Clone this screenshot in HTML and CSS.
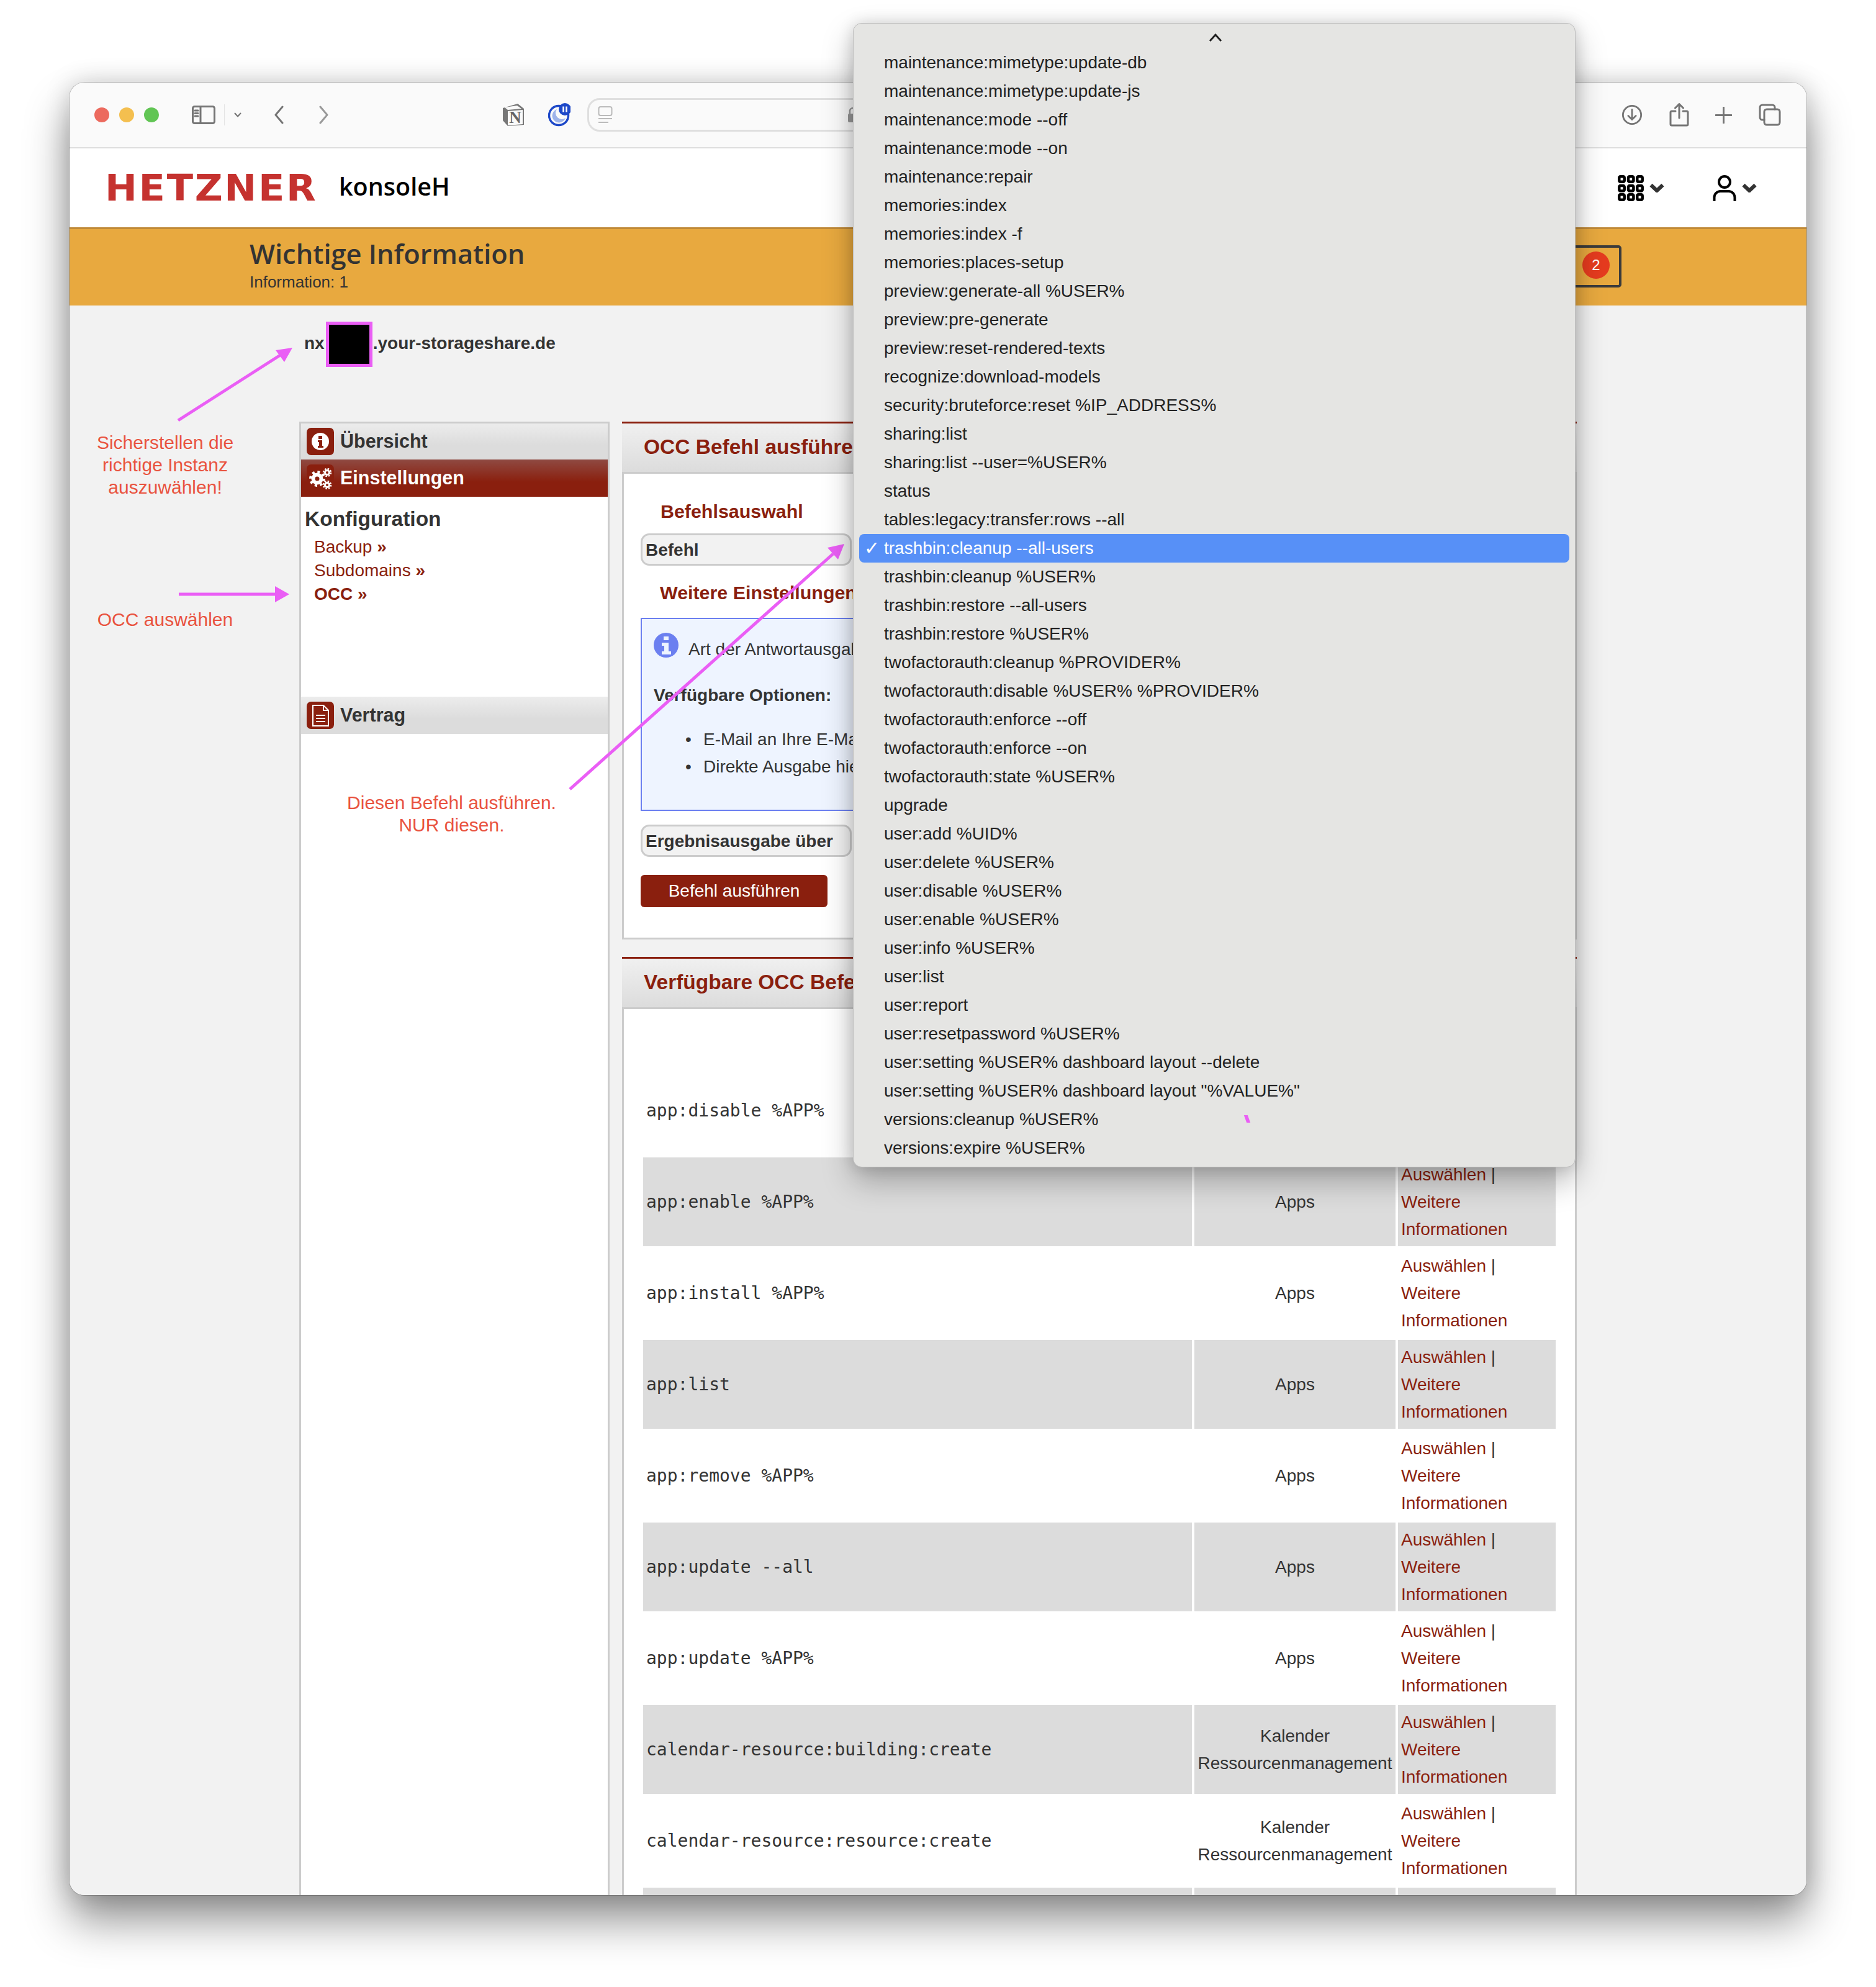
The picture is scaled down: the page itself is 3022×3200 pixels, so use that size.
FILE: index.html
```html
<!DOCTYPE html>
<html lang="de">
<head>
<meta charset="utf-8">
<title>konsoleH</title>
<link rel="stylesheet" href="styles.css">
</head>
<body>
<div class="stage">
  <div class="window">
    <div class="toolbar">
      <span class="light red"></span><span class="light yellow"></span><span class="light green"></span>
      <svg class="ti sidebar-ico" viewBox="0 0 38 30"><rect x="1.5" y="1.5" width="35" height="27" rx="3"/><path d="M14 2v26M5 8h5M5 12.500h5M5 17h5"/></svg>
      <span class="divider"></span>
      <svg class="ti chev-small" viewBox="0 0 12 8"><path d="M1.500 1.500L6 6.500l4.500-5"/></svg>
      <svg class="ti back" viewBox="0 0 16 30"><path d="M14 2L3 15l11 13"/></svg>
      <svg class="ti forward" viewBox="0 0 16 30"><path d="M2 2l11 13L2 28"/></svg>
      <svg class="notion" viewBox="0 0 36 38"><path d="M1 8L25 1l10 8v26l-26 2-8-9z" fill="#777"/><path d="M9 13l24-2v23l-24 2z" fill="#fafafa"/><path d="M4 7l5 4 22-2-7-5z" fill="#fafafa"/><text x="21" y="32" text-anchor="middle" class="notion-n">N</text></svg>
      <svg class="moon" viewBox="0 0 36 38"><circle cx="17" cy="20" r="15.500" fill="none" stroke="#1d48c8" stroke-width="3.500"/><path d="M14 10a11 11 0 1 0 14 14 10 10 0 0 1-14-14z" fill="#9db3ea"/><circle cx="27" cy="10" r="10" fill="#1d48c8"/><path d="M24.500 5.500v9M29.500 5.500v9" stroke="#fff" stroke-width="2.500"/></svg>
      <div class="urlbar">
        <svg class="reader" viewBox="0 0 24 28"><rect x="1.500" y="1" width="21" height="14" rx="3" fill="none" stroke="#bbb" stroke-width="2"/><path d="M1 20h22M1 26h16" stroke="#bbb" stroke-width="2"/></svg>
        <svg class="lock" viewBox="0 0 18 26"><path d="M4 12V7a5 5 0 0 1 10 0v5" fill="none" stroke="#999" stroke-width="2.500"/><rect x="1" y="11" width="16" height="14" rx="2" fill="#999"/></svg>
      </div>
      <svg class="ti dl" viewBox="0 0 36 36"><circle cx="18" cy="18" r="15.500"/><path d="M18 9v17M11.500 19.500L18 26l6.500-6.500"/></svg>
      <svg class="ti share" viewBox="0 0 32 38"><path d="M10 13H4a2 2 0 0 0-2 2v19a2 2 0 0 0 2 2h24a2 2 0 0 0 2-2V15a2 2 0 0 0-2-2h-6M16 24V2M9.500 8L16 1.500 22.500 8"/></svg>
      <svg class="ti plus" viewBox="0 0 28 28"><path d="M14 1v26M1 14h26"/></svg>
      <svg class="ti tabs" viewBox="0 0 36 36"><rect x="9" y="9" width="25" height="25" rx="4"/><path d="M9 26H6a4 4 0 0 1-4-4V6a4 4 0 0 1 4-4h16a4 4 0 0 1 4 4v3"/></svg>
    </div>

    <header class="brandbar">
      <span class="logo">HETZNER</span>
      <span class="konsole">konsoleH</span>
      <svg class="grid-ico" viewBox="0 0 42 42"><g fill="none" stroke="#000" stroke-width="4.500"><rect x="2.300" y="2.300" width="8.400" height="8.400" rx="2"/><rect x="17" y="2.300" width="8.400" height="8.400" rx="2"/><rect x="31.300" y="2.300" width="8.400" height="8.400" rx="2"/><rect x="2.300" y="17" width="8.400" height="8.400" rx="2"/><rect x="17" y="17" width="8.400" height="8.400" rx="2"/><rect x="31.300" y="17" width="8.400" height="8.400" rx="2"/><rect x="2.300" y="31.300" width="8.400" height="8.400" rx="2"/><rect x="17" y="31.300" width="8.400" height="8.400" rx="2"/><rect x="31.300" y="31.300" width="8.400" height="8.400" rx="2"/></g></svg>
      <svg class="chev-bold" viewBox="0 0 24 15"><path d="M2.500 3l9.500 9 9.500-9"/></svg>
      <svg class="user-ico" viewBox="0 0 38 42"><circle cx="19" cy="11" r="9" fill="none" stroke="#000" stroke-width="4"/><path d="M2.500 41v-5a10 10 0 0 1 10-10h13a10 10 0 0 1 10 10v5" fill="none" stroke="#000" stroke-width="4" stroke-linecap="round"/></svg>
      <svg class="chev-bold" viewBox="0 0 24 15"><path d="M2.500 3l9.500 9 9.500-9"/></svg>
    </header>

    <section class="notice">
      <div>
        <h1>Wichtige Information</h1>
        <p>Information: 1</p>
      </div>
      <div class="msgbox"><span class="count">2</span></div>
    </section>

    <div class="content">
      <div class="instance"><div class="instance-row">nx<span class="redact"></span>.your-storageshare.de</div></div>
      <div class="columns">
        <aside class="sidebar">
          <div class="nav">
            <span class="nav-ico"><svg viewBox="0 0 44 44"><circle cx="22" cy="22" r="14" fill="#fff"/><path d="M19 13h6v5h-6zM18 20h7v9h2v3H18v-3h2v-6h-2z" fill="#8a1f0e"/></svg></span>
            Übersicht
          </div>
          <div class="nav active">
            <span class="nav-ico"><svg viewBox="0 0 44 44" fill="none" stroke="#fff"><circle cx="17" cy="23" r="6.500" stroke-width="6"/><circle cx="17" cy="23" r="11" stroke-width="4" stroke-dasharray="4 4.640"/><circle cx="33" cy="13" r="3.500" stroke-width="3"/><circle cx="33" cy="13" r="6" stroke-width="2.500" stroke-dasharray="2.500 2.200"/><circle cx="33" cy="33" r="3.500" stroke-width="3"/><circle cx="33" cy="33" r="6" stroke-width="2.500" stroke-dasharray="2.500 2.200"/></svg></span>
            Einstellungen
          </div>
          <div class="subnav">
            <h3>Konfiguration</h3>
            <a href="#">Backup <b>»</b></a>
            <a href="#">Subdomains <b>»</b></a>
            <a href="#" class="current">OCC »</a>
          </div>
          <div class="nav">
            <span class="nav-ico"><svg viewBox="0 0 44 44" fill="none" stroke="#fff" stroke-width="2"><path d="M10 6h17l8 8v25H10z"/><path d="M27 6v8h8"/><path d="M15 22h15M15 27h15M15 32h15"/></svg></span>
            Vertrag
          </div>
        </aside>

        <main class="main">
          <section class="panel panel-run">
            <h2 class="panel-title">OCC Befehl ausführen</h2>
            <div class="panel-body">
              <h4>Befehlsauswahl</h4>
              <div class="field">Befehl</div>
              <h4 class="second">Weitere Einstellungen</h4>
              <div class="infobox">
                <p class="info-line"><svg class="info-ico" viewBox="0 0 40 40"><circle cx="20" cy="20" r="20" fill="#6b7ff0"/><path d="M16 6h8v6h-8zM13 16h11v14h4v5H13v-5h4v-9h-4z" fill="#eef4ff"/></svg>Art der Antwortausgabe</p>
                <p class="options"><strong>Verfügbare Optionen:</strong></p>
                <ul>
                  <li>E-Mail an Ihre E-Mail</li>
                  <li>Direkte Ausgabe hier</li>
                </ul>
              </div>
              <div class="field">Ergebnisausgabe über</div>
              <button class="run">Befehl ausführen</button>
            </div>
          </section>

          <section class="panel panel-list">
            <h2 class="panel-title">Verfügbare OCC Befehle</h2>
            <table class="cmds">
              <colgroup><col class="c1"><col class="c2"><col class="c3"></colgroup>
              <tbody>
                <tr><td><code>app:disable %APP%</code></td><td class="cat">Apps</td><td class="act"><a href="#">Auswählen</a> |<br><a href="#">Weitere Informationen</a></td></tr>
                <tr><td><code>app:enable %APP%</code></td><td class="cat">Apps</td><td class="act"><a href="#">Auswählen</a> |<br><a href="#">Weitere Informationen</a></td></tr>
                <tr><td><code>app:install %APP%</code></td><td class="cat">Apps</td><td class="act"><a href="#">Auswählen</a> |<br><a href="#">Weitere Informationen</a></td></tr>
                <tr><td><code>app:list</code></td><td class="cat">Apps</td><td class="act"><a href="#">Auswählen</a> |<br><a href="#">Weitere Informationen</a></td></tr>
                <tr><td><code>app:remove %APP%</code></td><td class="cat">Apps</td><td class="act"><a href="#">Auswählen</a> |<br><a href="#">Weitere Informationen</a></td></tr>
                <tr><td><code>app:update --all</code></td><td class="cat">Apps</td><td class="act"><a href="#">Auswählen</a> |<br><a href="#">Weitere Informationen</a></td></tr>
                <tr><td><code>app:update %APP%</code></td><td class="cat">Apps</td><td class="act"><a href="#">Auswählen</a> |<br><a href="#">Weitere Informationen</a></td></tr>
                <tr><td><code>calendar-resource:building:create</code></td><td class="cat">Kalender Ressourcenmanagement</td><td class="act"><a href="#">Auswählen</a> |<br><a href="#">Weitere Informationen</a></td></tr>
                <tr><td><code>calendar-resource:resource:create</code></td><td class="cat">Kalender Ressourcenmanagement</td><td class="act"><a href="#">Auswählen</a> |<br><a href="#">Weitere Informationen</a></td></tr>
                <tr><td></td><td class="cat"></td><td class="act"></td></tr>
              </tbody>
            </table>
          </section>
        </main>
      </div>

      <p class="note note-instance">Sicherstellen die<br>richtige Instanz<br>auszuwählen!</p>
      <p class="note note-occ">OCC auswählen</p>
      <p class="note note-run">Diesen Befehl ausführen.<br>NUR diesen.</p>
    </div>
  </div>

  <svg class="arrows" viewBox="0 0 3022 3200">
    <path d="M287 677L456 569M288 957H446M918 1271L1342 892"/>
    <polygon points="471,560 444,564 458,583"/>
    <polygon points="466,957 443,944 443,970"/>
    <polygon points="1360,876 1333,882 1350,901"/>
  </svg>

  <div class="menu">
    <svg class="menu-up" viewBox="0 0 22 14"><path d="M2 12l9-10 9 10"/></svg>
    <ul>
      <li>maintenance:mimetype:update-db</li>
      <li>maintenance:mimetype:update-js</li>
      <li>maintenance:mode --off</li>
      <li>maintenance:mode --on</li>
      <li>maintenance:repair</li>
      <li>memories:index</li>
      <li>memories:index -f</li>
      <li>memories:places-setup</li>
      <li>preview:generate-all %USER%</li>
      <li>preview:pre-generate</li>
      <li>preview:reset-rendered-texts</li>
      <li>recognize:download-models</li>
      <li>security:bruteforce:reset %IP_ADDRESS%</li>
      <li>sharing:list</li>
      <li>sharing:list --user=%USER%</li>
      <li>status</li>
      <li>tables:legacy:transfer:rows --all</li>
      <li class="selected"><span class="check">✓</span>trashbin:cleanup --all-users</li>
      <li>trashbin:cleanup %USER%</li>
      <li>trashbin:restore --all-users</li>
      <li>trashbin:restore %USER%</li>
      <li>twofactorauth:cleanup %PROVIDER%</li>
      <li>twofactorauth:disable %USER% %PROVIDER%</li>
      <li>twofactorauth:enforce --off</li>
      <li>twofactorauth:enforce --on</li>
      <li>twofactorauth:state %USER%</li>
      <li>upgrade</li>
      <li>user:add %UID%</li>
      <li>user:delete %USER%</li>
      <li>user:disable %USER%</li>
      <li>user:enable %USER%</li>
      <li>user:info %USER%</li>
      <li>user:list</li>
      <li>user:report</li>
      <li>user:resetpassword %USER%</li>
      <li>user:setting %USER% dashboard layout --delete</li>
      <li>user:setting %USER% dashboard layout "%VALUE%"</li>
      <li>versions:cleanup %USER%</li>
      <li>versions:expire %USER%</li>
    </ul>
    <span class="sliver"></span>
  </div>
</div>
</body>
</html>
```

FILE: styles.css
```css
* { box-sizing: border-box; }
html, body { margin: 0; background: #fff; }
body { font-family: "Liberation Sans", Arial, sans-serif; font-size: 28px; color: #333; }
.stage { position: relative; width: 3022px; height: 3200px; overflow: hidden; padding: 133px 112px 0; }
.window { width: 2798px; height: 2919px; border-radius: 24px; overflow: hidden; position: relative; box-shadow: 0 0 0 1px rgba(0,0,0,.2), 0 42px 70px rgba(0,0,0,.42), 0 0 40px rgba(0,0,0,.18); background: #f2f2f2; }

/* browser toolbar */
.toolbar { height: 106px; background: #fafafa; border-bottom: 2px solid #dedede; display: flex; align-items: center; padding-left: 40px; }
.light { width: 24px; height: 24px; border-radius: 50%; margin-right: 16px; }
.red { background: #ec6a5e; }
.yellow { background: #f4bf4f; }
.green { background: #61c554; margin-right: 0; }
.ti { fill: none; stroke: #757575; stroke-width: 3; stroke-linecap: round; stroke-linejoin: round; flex: none; }
.sidebar-ico { width: 38px; height: 30px; margin-left: 53px; }
.divider { width: 1px; height: 34px; background: #e4e4e4; margin-left: 14px; }
.chev-small { width: 12px; height: 8px; margin-left: 15px; stroke-width: 2; }
.back { width: 16px; height: 30px; margin-left: 52px; }
.forward { width: 16px; height: 30px; margin-left: 57px; stroke: #999; }
.notion { width: 36px; height: 38px; margin-left: 279px; flex: none; }
.notion-n { font: bold 27px "Liberation Serif", serif; fill: #666; }
.moon { width: 36px; height: 38px; margin-left: 38px; flex: none; }
.urlbar { width: 1500px; height: 54px; margin-left: 27px; border: 3px solid #dfdfdf; border-radius: 20px; display: flex; align-items: center; padding-left: 14px; flex: none; }
.reader { width: 24px; height: 28px; }
.lock { width: 18px; height: 26px; margin-left: 378px; }
.dl { width: 34px; height: 34px; margin-left: 166px; }
.share { width: 32px; height: 38px; margin-left: 43px; }
.plus { width: 27px; height: 27px; margin-left: 42px; }
.tabs { width: 36px; height: 36px; margin-left: 43px; }

/* brand bar */
.brandbar { height: 127px; background: #fff; display: flex; align-items: center; padding-left: 57px; }
.logo { font: bold 58px/1 "DejaVu Sans", sans-serif; color: #c5322f; letter-spacing: 2.5px; width: 377px; flex: none; white-space: nowrap; transform: scaleX(1.07); transform-origin: left center; }
.konsole { font: 600 39.500px/1 "Open Sans", sans-serif; color: #000; flex: none; margin-top: -3px; }
.grid-ico { width: 42px; height: 42px; margin-left: 1881px; flex: none; }
.user-ico { width: 38px; height: 42px; margin-left: 78px; flex: none; }
.chev-bold { width: 24px; height: 15px; margin-left: 9px; flex: none; fill: none; stroke: #333; stroke-width: 6; }

/* notice */
.notice { height: 126px; background: #e8a93f; border-top: 3px solid #c08a38; padding-left: 290px; display: flex; justify-content: space-between; }
.notice h1 { font: 600 43.400px/1 "Open Sans", sans-serif; color: #333; margin: 18px 0 0; }
.notice p { margin: 9px 0 0; font-size: 26px; line-height: 30px; }
.msgbox { width: 120px; height: 68px; margin: 26px 298px 0 0; border: 4px solid #3b3b3b; border-radius: 5px; display: flex; align-items: center; justify-content: flex-end; padding: 0 15px 4px 0; }
.count { width: 44px; height: 44px; border-radius: 50%; background: #e53b1f; color: #fff; font-size: 24px; line-height: 44px; text-align: center; }

/* content */
.content { height: 2560px; background: #f2f2f2; }
.instance { height: 187px; padding: 26px 0 0 378px; }
.instance-row { display: flex; align-items: center; height: 73px; font-weight: bold; font-size: 28px; line-height: 34px; color: #333; padding-bottom: 3px; }
.redact { width: 75px; height: 73px; background: #000; border: 5px solid #ea5ef5; flex: none; margin: 3px 1px 0 2px; }
.columns { display: flex; padding-left: 370px; gap: 20px; align-items: flex-start; }

/* sidebar */
.sidebar { width: 500px; height: 2400px; flex: none; background: #fff; border: solid #ccc; border-width: 3px 3px 0; }
.nav { height: 60px; display: flex; align-items: center; gap: 10px; font-size: 30.500px; font-weight: bold; padding: 0 0 1px 9px; background: linear-gradient(#ececec, #dcdcdc 60%); }
.nav:first-child { height: 58px; }
.nav-ico { width: 44px; height: 44px; border-radius: 7px; background: #8a1f0e; flex: none; }
.nav-ico svg { display: block; width: 44px; height: 44px; }
.active { background: linear-gradient(#8f4a42, #8a1f0e 60%); color: #fff; }
.subnav { height: 322px; padding: 16px 0 0 6px; display: flex; flex-direction: column; align-items: flex-start; }
.subnav h3 { font-size: 33.500px; line-height: 40px; margin: 0 0 6px; }
.subnav a { color: #8a1f0e; text-decoration: none; font-size: 28px; line-height: 38px; margin-left: 15px; }
.subnav .current { font-weight: bold; }

/* main panels */
.main { width: 1538px; flex: none; display: flex; flex-direction: column; gap: 28px; }
.panel { background: #fff; border: solid #ccc; border-width: 0 3px 3px; }
.panel-title { height: 84px; font-size: 33.500px; line-height: 76px; color: #8a1f0e; background: linear-gradient(#f0f0f0, #dcdcdc); border-top: 3px solid #8a1f0e; border-bottom: 3px solid #ccc; margin: 0 -3px; padding-left: 35px; }
.panel-run { height: 834px; }
.panel-body { padding: 42px 0 0 27px; }
.panel-body h4 { margin: 0 0 18px 32px; font-size: 30.400px; line-height: 36px; color: #8a1f0e; }
.panel-body .second { margin: 25px 0 23px 31px; }
.field { width: 340px; height: 52px; background: #f2f2f2; border: 3px solid #ccc; border-radius: 14px; padding-left: 5px; font-weight: bold; font-size: 28px; line-height: 48px; white-space: nowrap; }
.infobox { width: 1480px; height: 311px; background: #eef4ff; border: 2px solid #6b7ff0; padding: 0 0 0 19px; margin-bottom: 22px; }
.info-line { margin: 22px 0 0; height: 40px; position: relative; line-height: 54px; padding-left: 56px; }
.info-ico { position: absolute; left: 0; top: 0; width: 40px; height: 40px; }
.options { margin: 44px 0 0; line-height: 34px; }
.infobox ul { list-style: none; margin: 32px 0 0; padding: 0 0 0 80px; line-height: 44px; }
.infobox li { position: relative; }
.infobox li::before { content: "•"; position: absolute; left: -29px; }
.run { display: block; margin-top: 29px; width: 301px; height: 52px; background: #8a1f0e; color: #fff; border: 0; border-radius: 6px; font: 28px "Liberation Sans", sans-serif; }

/* table */
.cmds { margin: 88px 0 0 27px; width: 1478px; border-collapse: separate; border-spacing: 4px; table-layout: fixed; }
.c1 { width: 884px; }
.c2 { width: 324px; }
.c3 { width: 254px; }
.cmds td { height: 143px; padding: 0 5px; line-height: 44px; font-size: 28px; }
.cmds tr:nth-child(even) td { background: #dcdcdc; }
.cmds code { font: 28px/44px "DejaVu Sans Mono", monospace; }
.cmds .cat { text-align: center; padding: 0; }
.cmds a { color: #8a1f0e; text-decoration: none; }

/* annotations */
.note { position: absolute; margin: 0; color: #e9533f; font-size: 30px; line-height: 36px; text-align: center; }
.note-instance { left: 0; top: 562px; width: 308px; }
.note-occ { left: 0; top: 847px; width: 308px; }
.note-run { left: 415px; top: 1142px; width: 401px; }

.arrows { position: absolute; left: 0; top: 0; width: 3022px; height: 3200px; pointer-events: none; }
.arrows path { fill: none; stroke: #ea5ef5; stroke-width: 5; }
.arrows polygon { fill: #ea5ef5; }

/* popup menu */
.menu { position: absolute; left: 1374px; top: 37px; width: 1164px; height: 1843px; background: #e5e5e3; border: 1px solid #bdbdbd; border-radius: 14px; box-shadow: 0 22px 50px rgba(0,0,0,.28), 0 0 24px rgba(0,0,0,.14); font-size: 28px; color: #222; padding-top: 40px; }
.menu-up { position: absolute; left: 572px; top: 16px; width: 22px; height: 14px; fill: none; stroke: #222; stroke-width: 3; }
.menu ul { list-style: none; margin: 0; padding: 0; }
.menu li { height: 46px; line-height: 46px; padding-left: 49px; white-space: nowrap; position: relative; }
.menu .selected { margin: 0 9px 0 9px; padding-left: 40px; background: #5790f7; color: #fff; border-radius: 8px; }
.check { position: absolute; left: 8px; top: 0; font-family: "DejaVu Sans", sans-serif; font-size: 30px; }
.sliver { position: absolute; left: 631px; top: 1758px; width: 6px; height: 12px; background: #ea5ef5; transform: skewX(20deg); }
```
